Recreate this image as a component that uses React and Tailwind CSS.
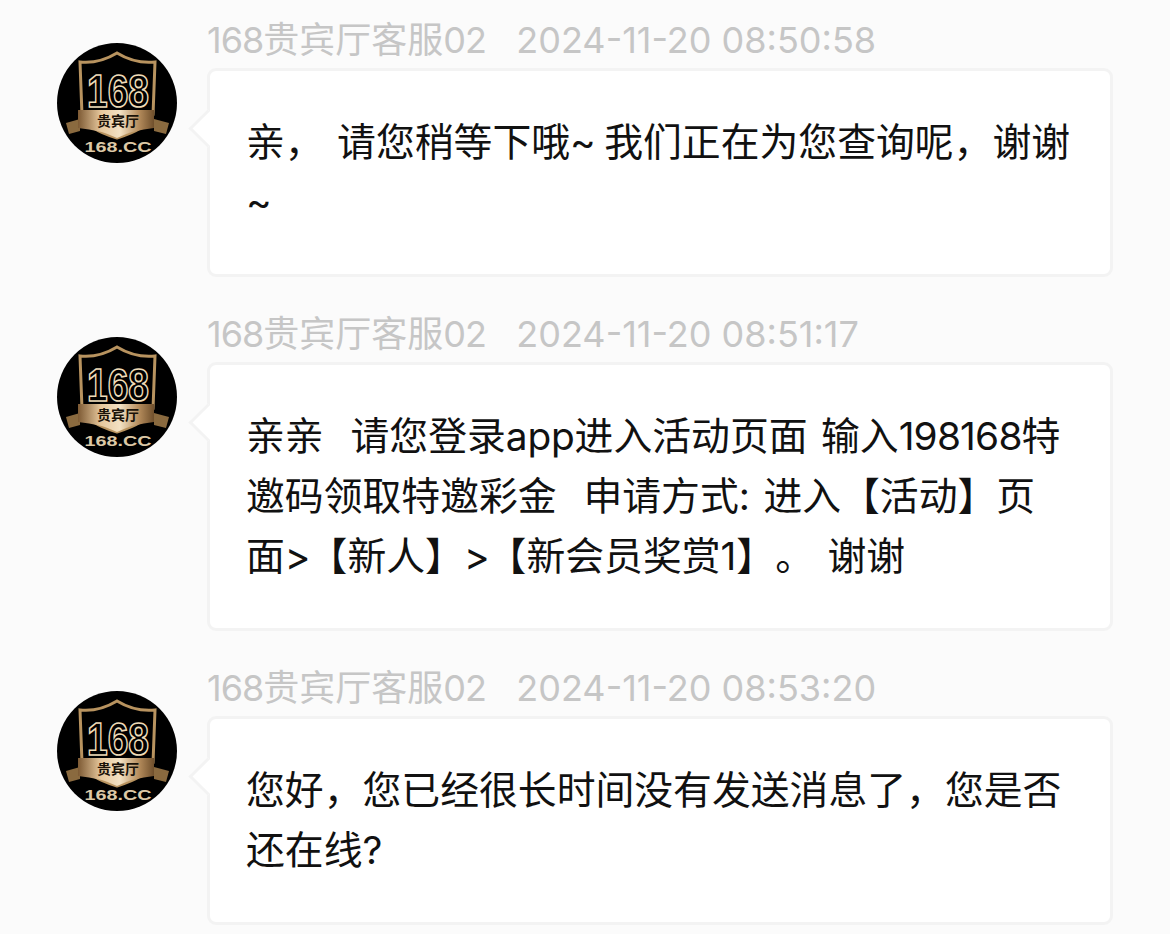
import React from 'react';

const tilde = <span className="tracking-[-5px]">~</span>;

const messages = [
    {
        time: '2024-11-20 08:50:58',
        body: <>亲， 请您稍等下哦{tilde} 我们正在为您查询呢，谢谢~</>,
    },
    {
        time: '2024-11-20 08:51:17',
        body: <>亲亲  请您登录<span className="tracking-[-0.2px]">app</span>进入活动页面 输入<span className="tracking-[-0.8px]">198168</span>特邀码领取特邀彩金  申请方式: 进入【活动】页面<span className="tracking-[-2px]">&gt;</span>【新人】<span className="tracking-[-2px]">&gt;</span>【新会员奖赏1】。 谢谢</>,
    },
    {
        time: '2024-11-20 08:53:20',
        body: <>您好，您已经很长时间没有发送消息了，您是否还在线?</>,
    },
];

function Avatar() {
    return (
        <svg viewBox="0 0 120 120" className="w-[120px] h-[120px] shrink-0 mt-[27px]">
            <defs>
                <linearGradient id="gold" x1="0" y1="0" x2="1" y2="0">
                    <stop offset="0" stopColor="#7d5a34" />
                    <stop offset="0.3" stopColor="#e6c79c" />
                    <stop offset="0.55" stopColor="#f3e2c4" />
                    <stop offset="0.8" stopColor="#b58c5c" />
                    <stop offset="1" stopColor="#6f4f2c" />
                </linearGradient>
            </defs>
            <circle cx="60" cy="60" r="60" fill="#000" />
            {/* shield */}
            <path d="M23 19 Q42 21 60 10 Q78 21 98 19 L96 72 Q90 86 60 95 Q30 86 25 72 Z" fill="#000" stroke="#b8935f" strokeWidth="3" />
            <text x="61" y="64" textAnchor="middle" fontFamily="'Liberation Sans', sans-serif" fontWeight="700" fontSize="47" fill="#000" stroke="#efdcb8" strokeWidth="1.7" textLength="62" lengthAdjust="spacingAndGlyphs">168</text>
            {/* ribbon */}
            <path d="M9 80 L23 76 L23 88 L12 91 Z" fill="#8a6a3f" />
            <path d="M112 80 L97 76 L97 88 L109 91 Z" fill="#8a6a3f" />
            <path d="M21 67 L97 67 L97 85 Q76 87 60 95 Q44 87 21 85 Z" fill="url(#gold)" />
            <text x="61" y="83" textAnchor="middle" fontFamily="'Noto Sans CJK SC', sans-serif" fontWeight="700" fontSize="14" fill="#1a1208">贵宾厅</text>
            <text x="61" y="109" textAnchor="middle" fontFamily="'Liberation Sans', sans-serif" fontWeight="700" fontSize="14" fill="#dcc8a6" textLength="67" lengthAdjust="spacingAndGlyphs">168.CC</text>
        </svg>
    );
}

function Message({ time, body }) {
    return (
        <div className="flex gap-[30px] mb-[33px]">
            <Avatar />
            <div className="flex-1 min-w-0">
                <div className="h-[48px] mb-[4px] flex items-center text-[36px] leading-[48px] text-[#c6c6c6] whitespace-pre">
                    <span className="tracking-[-1px]">168</span>贵宾厅客服<span className="tracking-[-1px]">02</span>{`   ${time}`}
                </div>
                <div className="relative bg-white border-[3px] border-[#f3f3f3] rounded-[9px] pt-[41px] pb-[42px] pl-[36px] pr-[38px]">
                    {/* tail */}
                    <div className="absolute left-[-16px] top-[44px] w-[27px] h-[27px] rotate-45 bg-white border-l-[3px] border-b-[3px] border-[#f3f3f3]"></div>
                    <p className="relative text-[38.85px] leading-[60px] text-[#111] whitespace-pre-wrap break-all [word-spacing:2.5px] [text-spacing-trim:space-all]">{body}</p>
                </div>
            </div>
        </div>
    );
}

export default function App() {
    return (
        <div className="h-[934px] overflow-hidden bg-[#fbfbfb] pt-[16px] pl-[57px] pr-[57px] font-['Inter','Noto_Sans_CJK_SC',sans-serif]">
            {messages.map((m) => (
                <Message key={m.time} time={m.time} body={m.body} />
            ))}
        </div>
    );
}
